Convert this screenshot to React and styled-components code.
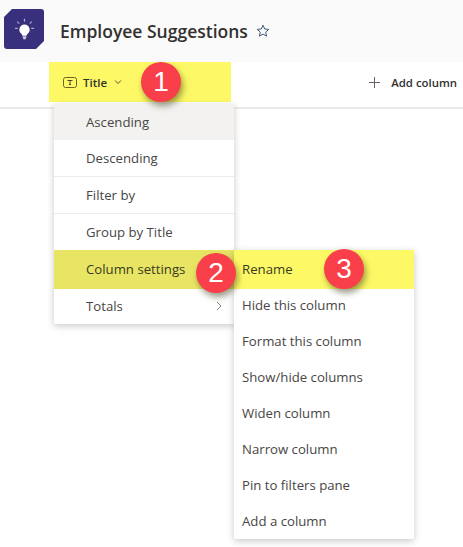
import styled, { createGlobalStyle } from "styled-components";

const GlobalStyle = createGlobalStyle`
  html, body { margin: 0; padding: 0; background: #fff; }
  body { font-family: "Open Sans", "Liberation Sans", sans-serif; color: #323130; }
`
const Page = styled.div`
  position: relative;
  width: 463px;
  height: 547px;
  overflow: hidden;
  background: #fff;
`
const Header = styled.header`
  height: 62px;
  background: #fafafa;
  display: flex;
  align-items: flex-start;
  padding: 9px 0 0 4px;
  box-sizing: border-box;
`
const Logo = styled.div`
  width: 40px;
  height: 40px;
  background: #38307c;
  border-radius: 3px;
  clip-path: polygon(8px 0, 100% 0, 100% 32px, 32px 100%, 0 100%, 0 8px);
  display: flex;
  align-items: center;
  justify-content: center;
`
const Title = styled.h1`
  margin: 10px 0 0 16px;
  font-size: 17.5px;
  line-height: 24px;
  font-weight: 600;
  color: #323130;
`
const Star = styled.svg`
  margin: 15px 0 0 8px;
  width: 14px;
  height: 14px;
`
const ColumnBar = styled.div`
  height: 45px;
  border-bottom: 2px solid #edebe9;
  display: flex;
  align-items: flex-start;
  justify-content: space-between;
`
const TitleColumn = styled.div`
  margin-left: 49px;
  width: 182px;
  height: 40px;
  background: #fdf966;
  display: flex;
  align-items: center;
  padding-left: 14px;
  box-sizing: border-box;
  font-size: 11.5px;
  font-weight: 600;
`
const ColumnLabel = styled.span`
  margin-left: 6px;
`
const Caret = styled.svg`
  margin-left: 7px;
  width: 8px;
  height: 8px;
`
const AddColumn = styled.div`
  display: flex;
  align-items: center;
  height: 40px;
  margin-right: 6px;
  font-size: 11.4px;
  font-weight: 600;
  color: #323130;
`
const Plus = styled.svg`
  width: 11px;
  height: 11px;
  margin-right: 11px;
`
const Menu = styled.ul`
  position: absolute;
  left: ${p => p.$left}px;
  top: ${p => p.$top}px;
  width: 180px;
  margin: 0;
  padding: 0;
  list-style: none;
  background: #fff;
  box-shadow: 0 2px 7px rgba(0, 0, 0, 0.22);
`
const MenuRow = styled.li`
  height: ${p => p.$height}px;
  box-sizing: border-box;
  display: flex;
  align-items: center;
  justify-content: space-between;
  padding: 0 11px ${p => (p.$lift ? "2px" : "0")} ${p => p.$indent}px;
  font-size: 13.2px;
  color: ${p => (p.$mark ? "#3a3a20" : "#484644")};
  background: ${p => p.$bg || "transparent"};
  border-bottom: ${p => (p.$divider ? "1px solid #edebe9" : "none")};
  margin-top: ${p => (p.$pull ? "-2px" : "0")};
`
const Badge = styled.div`
  position: absolute;
  left: ${p => p.$left}px;
  top: ${p => p.$top}px;
  width: 40px;
  height: 40px;
  border-radius: 50%;
  background: #f9404a;
  color: #fff;
  display: flex;
  align-items: center;
  justify-content: center;
  font-size: 28px;
  font-family: "Liberation Sans", Arial, sans-serif;
  box-shadow: 2px 4px 6px rgba(60, 60, 20, 0.5);
`

const mainItems = [
  { label: "Ascending", height: 36, bg: "#f3f2f1" },
  { label: "Descending", height: 37, divider: true },
  { label: "Filter by", height: 37, divider: true },
  { label: "Group by Title", height: 36 },
  { label: "Column settings", height: 39, bg: "#e9e564", mark: true, lift: true },
  { label: "Totals", height: 35, arrow: true, lift: true },
]

const subItems = [
  { label: "Rename", height: 39, bg: "#fdf966", mark: true, lift: true },
  { label: "Hide this column", height: 36, pull: true },
  { label: "Format this column", height: 36 },
  { label: "Show/hide columns", height: 36 },
  { label: "Widen column", height: 36 },
  { label: "Narrow column", height: 36 },
  { label: "Pin to filters pane", height: 36 },
  { label: "Add a column", height: 36 },
]

const BulbIcon = () => (
  <svg width="27" height="27" viewBox="0 0 24 24" fill="none">
    <path d="M12 7.500a4.600 4.600 0 0 0-2.800 8.200c.6.500.9 1 .9 1.800h3.800c0-.8.300-1.300.9-1.800A4.600 4.600 0 0 0 12 7.500z" fill="#fff" />
    <path d="M10.400 18.800h3.200M10.900 20.200h2.200" stroke="#fff" strokeWidth="1" />
    <path d="M12 2.500v2.500M5.500 5l1.800 1.800M18.500 5l-1.800 1.800M3.500 11H6M18 11h2.500" stroke="#a9a4d4" strokeWidth="1.100" />
  </svg>
)

const TextColumnIcon = () => (
  <svg width="14" height="11" viewBox="0 0 14 11" fill="none">
    <rect x="0.5" y="0.5" width="13" height="10" rx="2" stroke="#6b6520" />
    <path d="M4.500 3.500h5M7 3.500v4M6 7.500h2" stroke="#4a4620" />
  </svg>
)

const App = () => {
  return (
    <Page>
      <GlobalStyle />
      <Header>
        <Logo><BulbIcon /></Logo>
        <Title>Employee Suggestions</Title>
        <Star viewBox="0 0 14 14" fill="none">
          <path d="M7 1.200l1.700 3.800 4.100.4-3.100 2.700.9 4L7 10.100 3.400 12.100l.9-4L1.200 5.400l4.100-.4z" stroke="#3f5a78" strokeWidth="1" strokeLinejoin="round" />
        </Star>
      </Header>
      <ColumnBar>
        <TitleColumn>
          <TextColumnIcon />
          <ColumnLabel>Title</ColumnLabel>
          <Caret viewBox="0 0 8 8" fill="none">
            <path d="M1 2.500l3 3 3-3" stroke="#55523a" strokeWidth="1" />
          </Caret>
        </TitleColumn>
        <AddColumn>
          <Plus viewBox="0 0 11 11" fill="none">
            <path d="M5.500 0v11M0 5.500h11" stroke="#6e5f60" strokeWidth="1" />
          </Plus>
          Add column
        </AddColumn>
      </ColumnBar>
      <Menu $left={54} $top={104}>
        {mainItems.map(item => (
          <MenuRow key={item.label} $indent={32} $height={item.height} $bg={item.bg} $mark={item.mark} $divider={item.divider} $lift={item.lift}>
            {item.label}
            {item.arrow && (
              <svg width="8" height="10" viewBox="0 0 8 10" fill="none">
                <path d="M2 1l4 4-4 4" stroke="#8a8886" strokeWidth="1" />
              </svg>
            )}
          </MenuRow>
        ))}
      </Menu>
      <Menu $left={234} $top={250}>
        {subItems.map(item => (
          <MenuRow key={item.label} $indent={8} $height={item.height} $bg={item.bg} $mark={item.mark} $pull={item.pull} $lift={item.lift}>
            {item.label}
          </MenuRow>
        ))}
      </Menu>
      <Badge $left={141} $top={62}>1</Badge>
      <Badge $left={196} $top={253}>2</Badge>
      <Badge $left={324} $top={249}>3</Badge>
    </Page>
  )
}

export default App;
